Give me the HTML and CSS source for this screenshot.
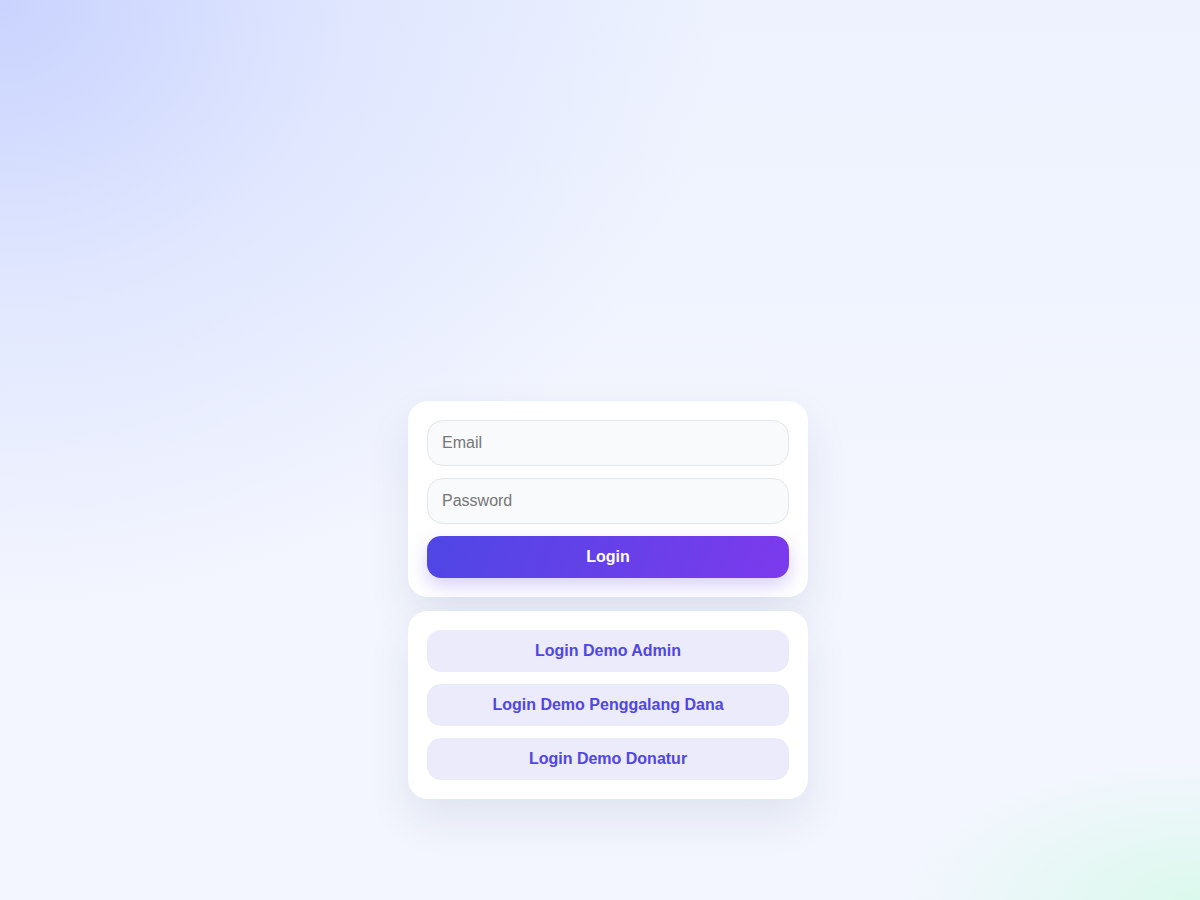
FILE: index.html
```html
<!DOCTYPE html>
<html lang="id">
<head>
    <meta charset="UTF-8">
    <meta name="viewport" content="width=device-width, initial-scale=1.0">
    <title>Login</title>
    <link rel="stylesheet" href="styles.css">
</head>
<body>

    <div class="wrap">
        <form class="card login-form" onsubmit="return false">
            <input type="email" class="field" placeholder="Email">
            <input type="password" class="field" placeholder="Password">
            <button type="submit" class="btn-primary">Login</button>
        </form>

        <div class="card demo-list">
            <button class="btn-demo">Login Demo Admin</button>
            <button class="btn-demo">Login Demo Penggalang Dana</button>
            <button class="btn-demo">Login Demo Donatur</button>
        </div>
    </div>

</body>
</html>
```

FILE: styles.css
```css
html, body {
    margin: 0;
    height: 100%;
}
body {
    font-family: "Liberation Sans", Arial, sans-serif;
    background-color: #f3f6fe;
    background-image:
        radial-gradient(ellipse 720px 620px at 0 0, rgba(199, 210, 254, 0.95), rgba(199, 210, 254, 0.35) 50%, rgba(199, 210, 254, 0) 100%),
        radial-gradient(ellipse 300px 140px at 100% 100%, rgba(209, 250, 229, 0.7), rgba(209, 250, 229, 0) 100%),
        linear-gradient(180deg, #edf2fe 0%, #f3f6fe 60%);
    background-repeat: no-repeat;
}
.wrap {
    width: 400px;
    margin: 0 auto;
    padding-top: 401px;
    padding-left: 16px;
    display: flex;
    flex-direction: column;
    gap: 14px;
}
.card {
    background: #fff;
    border-radius: 20px;
    padding: 19px;
    display: flex;
    flex-direction: column;
    gap: 12px;
    box-shadow: 0 20px 45px rgba(30, 41, 90, 0.09);
}
.field {
    height: 46px;
    box-sizing: border-box;
    border: 1px solid #e2e5ea;
    background: #f9fafb;
    border-radius: 16px;
    padding: 0 14px;
    font-family: inherit;
    font-size: 16px;
    color: #111827;
    outline: none;
}
.field::placeholder {
    color: #767676;
}
.btn-primary {
    height: 42px;
    border: none;
    border-radius: 14px;
    background: linear-gradient(110deg, #4f46e5, #7c3aed);
    color: #fff;
    font-family: inherit;
    font-size: 16px;
    font-weight: bold;
    cursor: pointer;
    box-shadow: 0 8px 18px rgba(99, 70, 235, 0.25);
}
.btn-demo {
    height: 42px;
    border: none;
    border-radius: 14px;
    background: #ecebfc;
    color: #4f46e5;
    font-family: inherit;
    font-size: 16px;
    font-weight: bold;
    cursor: pointer;
}
```
